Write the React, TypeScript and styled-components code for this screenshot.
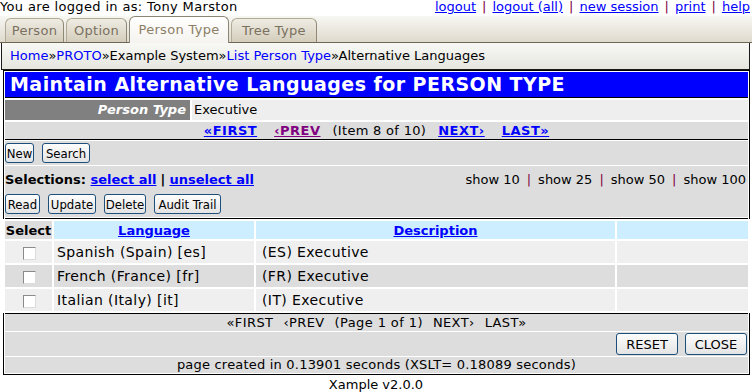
import React from 'react';
import styled, { createGlobalStyle, css } from 'styled-components';

const GlobalStyle = createGlobalStyle`
  body {
    margin: 0;
    background: #fff;
    color: #000;
    font-family: "DejaVu Sans", Verdana, sans-serif;
    font-size: 13px;
  }
  a { color: #0000ff; }
`;

const rows = [
  { lang: 'Spanish (Spain) [es]', desc: '(ES) Executive' },
  { lang: 'French (France) [fr]', desc: '(FR) Executive' },
  { lang: 'Italian (Italy) [it]', desc: '(IT) Executive' },
];

const tabs = [
  { label: 'Person', width: 59 },
  { label: 'Option', width: 61 },
  { label: 'Person Type', width: 100 },
  { label: 'Tree Type', width: 86 },
];

const navButtons = [
  { label: 'Read', width: 35 },
  { label: 'Update', width: 48 },
  { label: 'Delete', width: 42 },
  { label: 'Audit Trail', width: 67 },
];

export default function App() {
  return (
    <Page>
      <GlobalStyle />
      <TopBar>
        <Who>You are logged in as: Tony Marston</Who>
        <span>
          <a href="#">logout</a><Sep>|</Sep>
          <a href="#">logout (all)</a><Sep>|</Sep>
          <a href="#">new session</a><Sep>|</Sep>
          <a href="#">print</a><Sep>|</Sep>
          <a href="#">help</a>
        </span>
      </TopBar>

      <TabBar>
        {tabs.map(t => (
          <Tab key={t.label} w={t.width} active={t.label === 'Person Type'}>{t.label}</Tab>
        ))}
      </TabBar>

      <Crumbs>
        <CrumbLink>Home</CrumbLink>»<CrumbLink>PROTO</CrumbLink>»Example System»
        <CrumbLink>List Person Type</CrumbLink>»Alternative Languages
      </Crumbs>

      <MainBox>
        <Title>Maintain Alternative Languages for PERSON TYPE</Title>

        <ParentRow>
          <ParentLabel>Person Type</ParentLabel>
          <ParentValue>Executive</ParentValue>
        </ParentRow>

        <NavRow>
          <NavLink href="#">«FIRST</NavLink>
          <NavLink href="#" visited>‹PREV</NavLink>
          <NavText>(Item 8 of 10)</NavText>
          <NavLink href="#">NEXT›</NavLink>
          <NavLink href="#">LAST»</NavLink>
        </NavRow>

        <Rule />

        <ButtonRow>
          <SmallButton w={29}>New</SmallButton>
          <SmallButton w={48}>Search</SmallButton>
        </ButtonRow>

        <SelectArea>
          <SelectLine>
            <span>
              <b>Selections: </b>
              <BoldLink href="#">select all</BoldLink> <b>|</b> <BoldLink href="#">unselect all</BoldLink>
            </span>
            <span>
              show 10<ShowSep>|</ShowSep>show 25<ShowSep>|</ShowSep>show 50<ShowSep>|</ShowSep>show 100
            </span>
          </SelectLine>
          <ButtonLine>
            {navButtons.map(b => (
              <SmallButton key={b.label} w={b.width}>{b.label}</SmallButton>
            ))}
          </ButtonLine>
        </SelectArea>

        <Rule />

        <Grid>
          <colgroup>
            <col style={{ width: 47 }} />
            <col style={{ width: 200 }} />
            <col style={{ width: 359 }} />
            <col />
          </colgroup>
          <thead>
            <tr>
              <HeadCell plain>Select</HeadCell>
              <HeadCell><BoldLink href="#">Language</BoldLink></HeadCell>
              <HeadCell><BoldLink href="#">Description</BoldLink></HeadCell>
              <HeadCell />
            </tr>
          </thead>
          <tbody>
            {rows.map((r, i) => (
              <tr key={r.lang}>
                <Cell odd={i % 2 === 0} center><Check /></Cell>
                <Cell odd={i % 2 === 0}>{r.lang}</Cell>
                <Cell odd={i % 2 === 0} indent>{r.desc}</Cell>
                <Cell odd={i % 2 === 0} />
              </tr>
            ))}
          </tbody>
        </Grid>

        <Rule />

        <PlainNav>
          <span>«FIRST</span>
          <span>‹PREV</span>
          <span>(Page 1 of 1)</span>
          <span>NEXT›</span>
          <span>LAST»</span>
        </PlainNav>

        <ActionRow>
          <BigButton>RESET</BigButton>
          <BigButton>CLOSE</BigButton>
        </ActionRow>

        <Timing>page created in 0.13901 seconds (XSLT= 0.18089 seconds)</Timing>
      </MainBox>

      <Version>Xample v2.0.0</Version>
    </Page>
  );
}

const Page = styled.div`
  width: 752px;
`;

const TopBar = styled.div`
  display: flex;
  justify-content: space-between;
  height: 16px;
  line-height: 14px;
  padding: 0 2px 0 0;
`;

const Who = styled.span`
  letter-spacing: 0.35px;
`;

const Sep = styled.span`
  color: #800040;
  margin: 0 6px;
`;

const TabBar = styled.div`
  display: flex;
  align-items: flex-end;
  gap: 2px;
  height: 26px;
  padding-left: 5px;
  background: linear-gradient(#f7f7f3, #dedacd);
  border-bottom: 1px solid #6e6553;
`;

const Tab = styled.div<{ w: number; active?: boolean }>`
  width: ${props => props.w}px;
  height: 24px;
  line-height: 24px;
  text-align: center;
  letter-spacing: 0.3px;
  color: #7a705f;
  border: 1px solid #b1aa97;
  border-right-color: #8f8875;
  border-bottom: none;
  border-radius: 6px 6px 0 0;
  background: linear-gradient(#efece3, #d3cdbb);
  box-sizing: border-box;

  ${props => props.active && css`
    height: 27px;
    line-height: 26px;
    margin-bottom: -1px;
    color: #8c7f66;
    border-color: #8d8573;
    background: linear-gradient(#ffffff, #f4f3ef);
  `}
`;

const Crumbs = styled.div`
  margin: 0 2px 0 1px;
  height: 26px;
  line-height: 25px;
  padding-left: 8px;
  border: 1px solid #1a1a1a;
  border-top: none;
  background: linear-gradient(#f8f8f5, #e6e6df);
`;

const CrumbLink = styled.span`
  color: #0000ff;
`;

const MainBox = styled.div`
  margin: 0 2px 0 3px;
  border: 1px solid #000;
  padding: 1px;
  background: #fff;
`;

const Title = styled.div`
  height: 25px;
  line-height: 25px;
  padding-left: 5px;
  background: #0000ff;
  color: #fff;
  font-size: 19px;
  font-weight: bold;
  letter-spacing: 0.45px;
  border-bottom: 1px solid #000;
`;

const ParentRow = styled.div`
  display: grid;
  grid-template-columns: 185px 1fr;
  gap: 2px;
  height: 20px;
  margin-top: 2px;
`;

const ParentLabel = styled.div`
  background: #808080;
  color: #fff;
  font-weight: bold;
  font-style: italic;
  text-align: right;
  padding-right: 4px;
  line-height: 20px;
`;

const ParentValue = styled.div`
  background: #eeeeee;
  line-height: 20px;
  padding-left: 2px;
`;

const NavRow = styled.div`
  display: flex;
  justify-content: center;
  gap: 7px;
  height: 17px;
  line-height: 17px;
  margin-top: 2px;
  background: #dddddd;
`;

const NavLink = styled.a<{ visited?: boolean }>`
  font-weight: bold;
  letter-spacing: 0.5px;
  padding: 0 5px;
  color: ${props => (props.visited ? '#800080' : '#0000ff')};
`;

const NavText = styled.span`
  letter-spacing: 0.3px;
`;

const Rule = styled.div`
  height: 1px;
  background: #000;
`;

const ButtonRow = styled.div`
  display: flex;
  align-items: center;
  gap: 8px;
  height: 24px;
  margin-top: 1px;
  background: #dddddd;
  border-bottom: 1px solid #fff;
`;

const SelectArea = styled.div`
  display: flex;
  flex-direction: column;
  height: 51px;
  margin-bottom: 1px;
  background: #dddddd;
`;

const SelectLine = styled.div`
  display: flex;
  justify-content: space-between;
  align-items: center;
  height: 27px;
  padding-right: 2px;
`;

const ShowSep = styled.span`
  color: #800040;
  margin: 0 7px;
`;

const BoldLink = styled.a`
  font-weight: bold;
`;

const ButtonLine = styled.div`
  display: flex;
  align-items: center;
  gap: 8px;
  height: 22px;
`;

const SmallButton = styled.button<{ w: number }>`
  width: ${props => props.w}px;
  height: 20px;
  margin: 0;
  padding: 0;
  font-family: "Liberation Sans Narrow", "Arial Narrow", "DejaVu Sans Condensed", sans-serif;
  font-size: 13px;
  color: #000;
  border: 1px solid #1d4f7c;
  border-radius: 3px;
  background: linear-gradient(#fdfdfd, #e4e4e4);
`;

const Grid = styled.table`
  width: calc(100% + 4px);
  margin: 0 -2px;
  border-collapse: separate;
  border-spacing: 2px;
  background: #fff;
  table-layout: fixed;
`;

const HeadCell = styled.th<{ plain?: boolean }>`
  height: 18px;
  padding: 0;
  text-align: center;
  background: ${props => (props.plain ? '#dddddd' : '#cdeeff')};
`;

const Cell = styled.td<{ odd: boolean; center?: boolean; indent?: boolean }>`
  height: 22px;
  padding: 0 0 0 ${props => (props.center ? 0 : props.indent ? 6 : 3)}px;
  font-size: 14px;
  letter-spacing: 0.4px;
  background: ${props => (props.odd ? '#efefef' : '#dddddd')};
  text-align: ${props => (props.center ? 'center' : 'left')};
`;

const Check = styled.span`
  display: inline-block;
  width: 11px;
  height: 11px;
  margin-left: 2px;
  background: #fff;
  border: 1px solid #8a8a8a;
  border-right-color: #dcdcdc;
  border-bottom-color: #dcdcdc;
  vertical-align: middle;
`;

const PlainNav = styled.div`
  display: flex;
  justify-content: center;
  gap: 10px;
  height: 17px;
  line-height: 17px;
  letter-spacing: 0.4px;
  background: #dddddd;
  border-bottom: 1px solid #fff;
`;

const ActionRow = styled.div`
  display: flex;
  justify-content: flex-end;
  align-items: center;
  gap: 7px;
  height: 24px;
  padding-right: 1px;
  background: #dddddd;
  border-bottom: 1px solid #fff;
`;

const BigButton = styled.button`
  width: 62px;
  height: 22px;
  margin: 0;
  padding: 0;
  font-family: "DejaVu Sans", Verdana, sans-serif;
  font-size: 13px;
  color: #000;
  border: 1px solid #1d4f7c;
  border-radius: 3px;
  background: linear-gradient(#fdfdfd, #e4e4e4);
`;

const Timing = styled.div`
  height: 16px;
  line-height: 16px;
  text-align: center;
  letter-spacing: 0.2px;
  background: #dddddd;
`;

const Version = styled.div`
  text-align: center;
  line-height: 17px;
  margin-top: 1px;
`;
